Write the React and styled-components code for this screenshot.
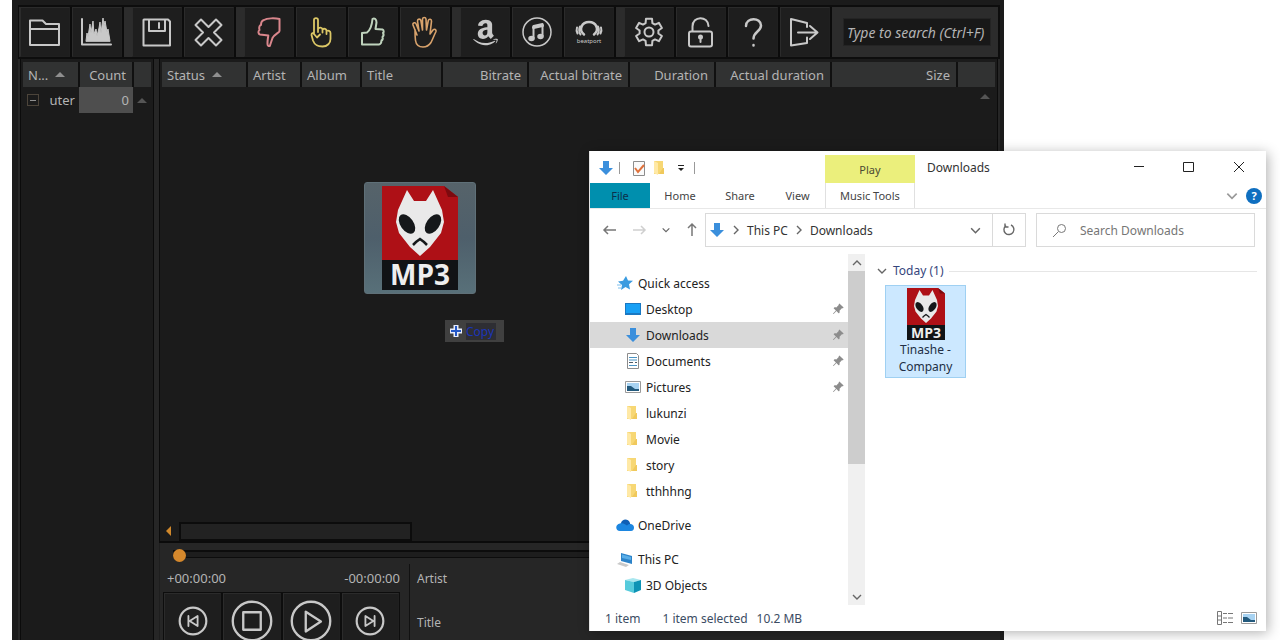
import React, { useState } from "react";
import styled, { createGlobalStyle } from "styled-components";
import { FaAmazon } from "react-icons/fa";
import { BsPinAngleFill } from "react-icons/bs";

const GlobalStyle = createGlobalStyle`
  * {
    box-sizing: border-box;
  }

  body {
    margin: 0;
    background: #ffffff;
    font-family: "Noto Sans", "Open Sans", sans-serif;
    font-size: 12px;
  }

  button,
  input {
    font: inherit;
    color: inherit;
  }
`;

const Desktop = styled.main`
  position: relative;
  min-height: 100vh;
  overflow: hidden;
`;

// Player window
const Player = styled.section`
  display: flex;
  flex-direction: column;
  height: 100vh;
  margin: 0 276px 0 12px;
  padding: 5px 4px 0 6px;
  overflow: hidden;
  background: #1b1b1b;
  color: #b4b4b4;
`;

const Toolbar = styled.div`
  display: flex;
  flex: none;
  gap: 8px;
  padding-left: 1px;
  border: 2px solid #0d0d0d;
  border-left-width: 1px;
  background: #2c2c2c;
`;

const ToolGroup = styled.div`
  display: flex;
  gap: 2px;
  padding-right: 2px;
  background: #0b0b0b;
`;

const ToolButton = styled.button`
  display: grid;
  place-items: center;
  width: 50px;
  height: 50px;
  padding: 0;
  border: 1px solid #2b2b2b;
  border-right-color: #202020;
  border-bottom-color: #202020;
  background: #1e1e1e;
  color: ${({ $color }) => $color || "#c8c8c8"};
`;

const SearchArea = styled.div`
  display: flex;
  flex: 1;
  align-items: center;
  padding: 0 7px 0 3px;
`;

const TrackSearch = styled.input`
  width: 100%;
  height: 28px;
  padding: 0 3px;
  border: 1px solid #242424;
  background: #181818;
  font-style: italic;
  font-size: 14px;

  &::placeholder {
    color: #b4b4b4;
    opacity: 1;
  }
`;

const PlayerBody = styled.div`
  display: flex;
  flex: 1;
  min-height: 0;
  border-left: 2px solid #262626;
`;

const Sidebar = styled.div`
  flex: none;
  width: 134px;
  padding: 3px 2px 0 2px;
  border-left: 1px solid #0b0b0b;
  border-right: 1px solid #0b0b0b;
`;

const Splitter = styled.div`
  flex: none;
  width: 5px;
  background: #262626;
`;

const MainColumn = styled.div`
  display: flex;
  flex: 1;
  flex-direction: column;
  min-width: 0;
  border-right: 2px solid #262626;
`;

const ListPane = styled.div`
  position: relative;
  display: flex;
  flex: 1;
  flex-direction: column;
  min-height: 0;
  padding: 3px 2px 0 2px;
  border: 1px solid #0b0b0b;
  border-width: 0 1px 2px 1px;
`;

const Table = styled.table`
  width: 100%;
  table-layout: fixed;
  border-collapse: collapse;
`;

const HeadCell = styled.th`
  height: 25px;
  padding: 0 ${({ $right }) => ($right ? "6px" : "5px")};
  border-right: 2px solid #101010;
  background: #313232;
  font-size: 13px;
  font-weight: normal;
  text-align: ${({ $right }) => ($right ? "right" : "left")};
  white-space: nowrap;

  &:last-child {
    border-right: 0;
  }
`;

const SortArrow = styled.span`
  display: inline-block;
  margin-left: 7px;
  border: 5px solid transparent;
  border-top: 0;
  border-bottom-color: #8f8f8f;
  vertical-align: 3px;
`;

const TreeCell = styled.td`
  height: 26px;
  padding: 0 4px;
  text-align: right;
  background: ${({ $filled }) => ($filled ? "#4e4e4e" : "transparent")};
  font-size: 13px;
`;

const TreeName = styled.div`
  display: flex;
  align-items: center;
  justify-content: space-between;
`;

const TreeToggle = styled.button`
  display: grid;
  place-items: center;
  width: 12px;
  height: 12px;
  padding: 0;
  border: 1px solid #4c443a;
  background: none;
  line-height: 8px;

  &::before {
    content: "";
    width: 6px;
    height: 1px;
    background: #8f8f8f;
  }
`;

const ScrollHint = styled.span`
  display: block;
  width: 10px;
  margin-left: auto;
  margin-right: ${({ $inset }) => $inset}px;
  margin-top: ${({ $top }) => $top || 0}px;
  border: 5px solid transparent;
  border-top: 0;
  border-bottom-color: #555555;
`;

const HorizontalScroll = styled.div`
  display: flex;
  align-items: center;
  height: 20px;
  margin-top: auto;
`;

const ScrollLeft = styled.button`
  width: 17px;
  height: 18px;
  padding: 0 0 0 4px;
  border: 0;
  background: none;

  &::before {
    content: "";
    display: block;
    width: 0;
    border: 5px solid transparent;
    border-left: 0;
    border-right-color: #d0882b;
  }
`;

const ScrollThumb = styled.div`
  width: 28%;
  height: 19px;
  border: 2px solid #0c0c0c;
  background: #222222;
`;

const DragImage = styled.div`
  position: absolute;
  left: 204px;
  top: 123px;
  display: grid;
  place-items: center;
  width: 112px;
  height: 112px;
  border: 1px solid #5f7078;
  border-radius: 3px;
  background: linear-gradient(#56636a, #4e5f6b 50%, #587079);
`;

const CopyHint = styled.div`
  position: absolute;
  left: 285px;
  top: 261px;
  display: flex;
  align-items: center;
  gap: 3px;
  height: 22px;
  padding: 0 8px 0 4px;
  background: #404040;
  color: #1c35b8;

  span {
    padding-right: 2px;
    background: #2e2e33;
  }
`;

const Controls = styled.div`
  flex: none;
  height: 97px;
  border-left: 1px solid #1e1e1e;
  background: #262626;
`;

const SeekBar = styled.input`
  display: block;
  width: calc(100% - 24px);
  height: 18px;
  margin: 3px 12px 0 13px;
  appearance: none;
  background: linear-gradient(
    transparent 4px,
    #0c0c0c 4px,
    #0c0c0c 6px,
    #1d1d1d 6px,
    #1d1d1d 11px,
    #0c0c0c 11px,
    #0c0c0c 12px,
    transparent 12px
  );

  &::-webkit-slider-thumb {
    appearance: none;
    width: 13px;
    height: 13px;
    border-radius: 50%;
    background: #d5882c;
  }
`;

const ControlRow = styled.div`
  display: flex;
`;

const Transport = styled.div`
  width: 250px;
  padding: 5px 9px 0 3px;
  border-right: 1px solid #111111;
`;

const Times = styled.div`
  display: flex;
  justify-content: space-between;
  height: 23px;
  padding: 0 0 0 4px;
  font-size: 13px;
  line-height: 18px;
`;

const TransportButtons = styled.div`
  display: flex;
  gap: 2px;
  padding: 1px;
  background: #0d0d0d;
`;

const TransportButton = styled(ToolButton)`
  flex: 1;
  height: 56px;
`;

const TrackInfo = styled.div`
  padding: 6px 7px;
  line-height: 18px;

  p {
    margin: 0 0 26px;
  }
`;

// Explorer window
const Explorer = styled.section`
  position: absolute;
  left: 589px;
  right: 14px;
  top: 151px;
  bottom: 9px;
  display: flex;
  flex-direction: column;
  border-left: 1px solid #e4e4e4;
  background: #ffffff;
  box-shadow: 2px 2px 12px rgba(0, 0, 0, 0.3);
  color: #333333;
`;

const TitleBar = styled.header`
  display: flex;
  height: 32px;
  padding-right: 2px;
`;

const QuickTools = styled.div`
  display: flex;
  align-items: center;
  gap: 5px;
  width: 235px;
  padding: 2px 0 0 8px;
`;

const QuickButton = styled.button`
  display: grid;
  place-items: center;
  width: 16px;
  height: 18px;
  padding: 0;
  border: 0;
  background: none;
`;

const Divider = styled.span`
  width: 1px;
  height: 12px;
  margin-right: 6px;
  background: #999999;
`;

const PlayTab = styled.button`
  width: 90px;
  margin-top: 4px;
  padding: 0;
  border: 0;
  background: #ebef7c;
  color: #4a4a33;
  font-size: 11px;
`;

const WindowTitle = styled.h1`
  flex: 1;
  margin: 0;
  padding-left: 12px;
  font-size: 12px;
  font-weight: normal;
  line-height: 33px;
`;

const WindowButton = styled.button`
  display: grid;
  place-items: center;
  width: 50px;
  padding: 0;
  border: 0;
  background: none;
`;

const Ribbon = styled.nav`
  display: flex;
  height: 26px;
  border-bottom: 1px solid #e8e8e8;
`;

const RibbonTab = styled.button`
  width: ${({ $width }) => $width}px;
  height: 25px;
  padding: 0;
  border: 0;
  background: ${({ $file }) => ($file ? "#008fae" : "none")};
  color: ${({ $file }) => ($file ? "#0b2f4a" : "#444444")};
  font-size: 11px;
  ${({ $outlined }) =>
    $outlined && "border-left: 1px solid #e0e0e0; border-right: 1px solid #e0e0e0;"}
`;

const RibbonEnd = styled.div`
  display: flex;
  align-items: center;
  gap: 7px;
  margin-left: auto;
  padding-right: 4px;
`;

const PlainButton = styled.button`
  display: grid;
  place-items: center;
  padding: 0;
  border: 0;
  background: none;
`;

const HelpButton = styled(PlainButton)`
  width: 16px;
  height: 16px;
  border-radius: 50%;
  background: #0f6fc0;
  color: #ffffff;
  font-size: 11px;
  font-weight: bold;
`;

const AddressRow = styled.div`
  display: flex;
  align-items: center;
  height: 42px;
  padding-right: 11px;
`;

const NavButtons = styled.div`
  display: flex;
  align-items: center;
  justify-content: space-between;
  width: 115px;
  padding: 0 5px 0 12px;
`;

const AddressBar = styled.div`
  display: flex;
  flex: 316;
  align-items: center;
  height: 34px;
  padding-left: 3px;
  border: 1px solid #dadada;
`;

const Crumb = styled.a`
  display: flex;
  align-items: center;
  gap: 5px;
  margin-left: 5px;
  color: #333333;
  text-decoration: none;
`;

const AddressEnd = styled.div`
  display: flex;
  align-self: stretch;
  margin-left: auto;

  button {
    width: 33px;
  }

  button + button {
    border-left: 1px solid #dadada;
  }
`;

const SearchBox = styled.label`
  display: flex;
  flex: 202;
  align-items: center;
  gap: 13px;
  height: 34px;
  margin-left: 10px;
  padding-left: 15px;
  border: 1px solid #dadada;

  input {
    min-width: 0;
    flex: 1;
    padding: 0;
    border: 0;
    outline: 0;
  }

  input::placeholder {
    color: #767676;
    opacity: 1;
  }
`;

const ExplorerBody = styled.div`
  display: flex;
  flex: 1;
  min-height: 0;
`;

const NavTree = styled.ul`
  width: 258px;
  margin: 0;
  padding: 19px 0 0;
  list-style: none;
`;

const NavItem = styled.li`
  margin-top: ${({ $spaced }) => ($spaced ? "8px" : "0")};
  background: ${({ $selected }) => ($selected ? "#d9d9d9" : "transparent")};
`;

const NavLink = styled.a`
  display: flex;
  align-items: center;
  gap: 5px;
  height: 26px;
  padding: 0 4px 0 ${({ $nested }) => ($nested ? "35px" : "27px")};
  color: #222222;
  text-decoration: none;

  span {
    flex: 1;
  }
`;

const VerticalScroll = styled.div`
  display: flex;
  flex-direction: column;
  width: 17px;
  margin-top: 3px;
  background: #f0f0f0;

  button {
    height: 17px;
  }

  div {
    height: 55%;
    background: #cdcdcd;
  }

  button:last-child {
    margin-top: auto;
  }
`;

const FileArea = styled.div`
  flex: 1;
  padding: 11px 9px 0 11px;
`;

const GroupTitle = styled.h2`
  display: flex;
  align-items: center;
  gap: 5px;
  margin: 0 0 5px;
  color: #35457c;
  font-size: 12px;
  font-weight: normal;
  line-height: 18px;

  &::after {
    content: "";
    flex: 1;
    height: 1px;
    background: #e6e6e6;
  }
`;

const FileTile = styled.button`
  display: flex;
  flex-direction: column;
  align-items: center;
  width: 81px;
  margin-left: 9px;
  padding: 2px 8px;
  border: 1px solid #9fd0f2;
  background: #cce8ff;
  color: #222f45;
  line-height: 17px;

  svg {
    margin-bottom: 1px;
  }
`;

const StatusBar = styled.footer`
  display: flex;
  align-items: center;
  height: 26px;
  padding: 0 9px 0 15px;
  color: #3c4c63;

  span:nth-child(2) {
    margin: 0 9px 0 22px;
  }
`;

const ViewButtons = styled.div`
  display: flex;
  gap: 8px;
  margin-left: auto;
`;

function Icon({ size = 36, width = 2, children }) {
  return (
    <svg
      width={size}
      height={size}
      viewBox="0 0 36 36"
      fill="none"
      stroke="currentColor"
      strokeWidth={width}
      strokeLinejoin="round"
      strokeLinecap="round"
      aria-hidden="true"
    >
      {children}
    </svg>
  );
}

// six teeth, four corner points each
const gearPoints = Array.from({ length: 6 })
  .flatMap((_, tooth) =>
    [
      [-21, 9.5],
      [-13, 13.5],
      [13, 13.5],
      [21, 9.5],
    ].map(([offset, radius]) => {
      const angle = ((tooth * 60 - 90 + offset) * Math.PI) / 180;
      return `${18 + radius * Math.cos(angle)},${18 + radius * Math.sin(angle)}`;
    })
  )
  .join(" ");

const toolGroups = [
  [
    {
      name: "Open folder",
      icon: (
        <Icon>
          <path d="M3 31V6.500h12.500l3.500 3.500h13V31zM3 15h29" />
        </Icon>
      ),
    },
    {
      name: "Spectrum",
      icon: (
        <Icon>
          <path d="M3 5v25.500h29" />
          <path
            d="M7 27l1-8 1 4 2-13 1 9 2-12 1 13 2-5 1 7 2-8 1-6 1 11 2-15 1 8 1-5 2 11 1-3 2 12z"
            fill="currentColor"
            strokeWidth="1"
          />
        </Icon>
      ),
    },
  ],
  [
    {
      name: "Save",
      icon: (
        <Icon>
          <path d="M5 5.500h24l2 2V31.500H4.500V6zM10 6v11h16V6M20 9v5" />
        </Icon>
      ),
    },
    {
      name: "Remove",
      icon: (
        <Icon>
          <path d="M10 5.500l7.500 7.500L25 5.500l5.500 5.500-7.500 7.500 7.500 7.500-5.500 5.500-7.500-7.500-7.500 7.500L4.500 26l7.500-7.500L4.500 11z" />
        </Icon>
      ),
    },
  ],
  [
    {
      name: "Bad",
      color: "#d9868c",
      icon: (
        <Icon>
          <path d="M13 6C16 4 24 4 28.500 5v12c0 1.500-5.500 3.500-7 7l-2.700 8c-2.800.500-2.800-2-1.500-10.500L9 20.500c-2-.5-2-3.500-.5-4.500-1-3 .5-5 1.500-5 0-3 1-4.500 3-5z" />
        </Icon>
      ),
    },
    {
      name: "Check",
      color: "#dcc766",
      icon: (
        <Icon width={1.8}>
          <path d="M11 20V6c0-2.500 4-2.500 4 0v9c1-2 4-2 4.500.5 1.500-1.500 4-.5 4 1.500 1.500-1 4 0 4 2v6c0 4-3 7.500-8 7.500-6 0-8-2-9.500-6L8.500 21c0-2 1.500-2.500 2.500-1l3 3.500 3-3M15 15v3M19.500 15.500v3M23.500 17v3" />
        </Icon>
      ),
    },
    {
      name: "Good",
      color: "#bfd3bd",
      icon: (
        <Icon>
          <path d="M7 19l5-.5c4-3 5-8 5.500-13.500 2-1.500 4 .5 4 3.500l-1 6.500 7 .5c1.500.5 1.500 3 .5 3.500 1 1.500.5 3-.5 4 .5 1.500 0 3-1 3.500 0 2-.5 3.500-2.500 4H7z" />
        </Icon>
      ),
    },
    {
      name: "Stop",
      color: "#d9a36c",
      icon: (
        <Icon width={1.6}>
          <path d="M10 21L6 11c-.5-2.500 2.500-3 3.200-1l2.800 7-1.500-10c0-2.500 3-2.500 3.400-.3L15.500 16V5c.3-2 3.200-2 3.500 0l.5 11 1.800-9.500c.7-2 3.400-1.500 3.200.8L23 20l3-4c1.500-1.500 3.500-.5 3 1.500-2 4-3 7-5 11-2 3-4 4.500-8 4.500-5 0-7-3-7.500-6.500-.5-4-.5-8-.5-11" />
        </Icon>
      ),
    },
  ],
  [
    { name: "Amazon", icon: <FaAmazon size={29} /> },
    {
      name: "iTunes",
      icon: (
        <Icon width={1.5}>
          <circle cx="18" cy="18" r="14" />
          <path d="M14.500 24V12l9-2v12" strokeWidth="2" />
          <path d="M14.500 13.500l9-2" strokeWidth="3" />
          <g fill="currentColor">
            <ellipse cx="12.500" cy="24.500" rx="2.500" ry="2" />
            <ellipse cx="21.500" cy="22.500" rx="2.500" ry="2" />
          </g>
        </Icon>
      ),
    },
    {
      name: "Beatport",
      icon: (
        <Icon>
          <path d="M13 20.500c-6-5-2-12.500 5-12.500S29 15.500 23 20.500" strokeWidth="2.500" />
          <path d="M9 12.500c-1.500 3-1 5.500.5 8M27 12.500c1.500 3 1 5.500-.5 8M6 13.500c-.7 2-.5 4 .5 6M30 13.500c.7 2 .5 4-.5 6" />
          <text
            x="18"
            y="29"
            textAnchor="middle"
            fontSize="6"
            stroke="none"
            fill="currentColor"
          >
            beatport
          </text>
        </Icon>
      ),
    },
  ],
  [
    {
      name: "Settings",
      icon: (
        <Icon>
          <polygon points={gearPoints} />
          <circle cx="18" cy="18" r="4.500" />
        </Icon>
      ),
    },
    {
      name: "Unlock",
      icon: (
        <Icon>
          <rect x="6" y="17.500" width="23" height="15" rx="2" />
          <path d="M9.500 17v-4.500C9.500 1.500 25 1.500 25.500 12" />
          <circle cx="17.500" cy="23" r="1.500" fill="currentColor" />
          <path d="M17.500 24v4" />
        </Icon>
      ),
    },
    {
      name: "Help",
      icon: (
        <Icon width={2.5}>
          <path d="M11 12c0-9 15-9 15-.5 0 6-7.500 6-7.500 13M18.500 31v.5" />
        </Icon>
      ),
    },
    {
      name: "Exit",
      icon: (
        <Icon>
          <path d="M20 13V9L4 5v26.500l16-2.500v-5.500M11 18.500h18M23 12l7.500 6.500L23 25" />
        </Icon>
      ),
    },
  ],
];

const columns = [
  { name: "Status", width: 85, sorted: true },
  { name: "Artist", width: 54 },
  { name: "Album", width: 60 },
  { name: "Title", width: 81 },
  { name: "Bitrate", width: 86, right: true },
  { name: "Actual bitrate", width: 101, right: true },
  { name: "Duration", width: 86, right: true },
  { name: "Actual duration", width: 116, right: true },
  { name: "Size", width: 126, right: true },
];

function Mp3Icon({ width }) {
  return (
    <svg
      width={width}
      viewBox="0 0 76 104"
      overflow="visible"
      role="img"
      aria-label="MP3 file"
    >
      <path d="M0 0h62l14 11v63H0z" fill="#ae1016" />
      <path d="M62 0l14 11H66z" fill="#7d0a0f" />
      <path d="M0 74h76v30H0z" fill="#111316" />
      <path
        d="M25 4l7 11h12l7-11 9 20 2 12-3 11-11 14-10 9-10-9-11-14-3-11 2-12z"
        fill="#e9e9e9"
      />
      <g fill="#15181a">
        <ellipse cx="25" cy="38" rx="6.500" ry="11" transform="rotate(-35 25 38)" />
        <ellipse cx="51" cy="38" rx="6.500" ry="11" transform="rotate(35 51 38)" />
      </g>
      <path d="M31 59l3-3 4-3 4 3 3 3" fill="none" stroke="#15181a" strokeWidth="2.500" />
      <text
        x="38"
        y="99"
        textAnchor="middle"
        fontFamily="Open Sans, sans-serif"
        fontWeight="700"
        fontSize="28"
        fill="#eeeeee"
      >
        MP3
      </text>
    </svg>
  );
}

function DownloadArrow() {
  return (
    <svg width="16" height="16" viewBox="0 0 16 16" aria-hidden="true">
      <path d="M5 1h6v7h4l-7 7-7-7h4z" fill="#3b8fdc" />
    </svg>
  );
}

function FolderIcon() {
  return (
    <svg width="16" height="16" viewBox="0 0 16 16" aria-hidden="true">
      <path d="M2 1h9v13H2z" fill="#f7d774" />
      <path d="M2 1l4 2v12l-4-2z" fill="#ffe9a6" />
      <path d="M11 8h1v6H7z" fill="#f0c95c" />
    </svg>
  );
}

function PictureIcon() {
  return (
    <svg width="16" height="16" viewBox="0 0 16 16" aria-hidden="true">
      <path d="M.5 2.500h15v11H.5z" fill="#ffffff" stroke="#9a9a9a" />
      <path d="M2 4h12v8H2z" fill="#a8d3f2" />
      <path d="M2 7l4 0 4 3h4v2H2z" fill="#235a7d" />
    </svg>
  );
}

function Chevron({ direction = "down", size = 12, color = "#666666" }) {
  const turns = { down: 0, up: 180, right: -90 };
  return (
    <svg width={size} height={size} viewBox="0 0 12 12" aria-hidden="true">
      <path
        d="M2 4l4 4 4-4"
        transform={`rotate(${turns[direction]} 6 6)`}
        fill="none"
        stroke={color}
        strokeWidth="1.400"
      />
    </svg>
  );
}

function Arrow({ turn = 0, color = "#777777" }) {
  return (
    <svg width="16" height="16" viewBox="0 0 16 16" aria-hidden="true">
      <path
        d="M14 8H2M6 4L2 8l4 4"
        transform={`rotate(${turn} 8 8)`}
        fill="none"
        stroke={color}
        strokeWidth="1.500"
      />
    </svg>
  );
}

const navItems = [
  {
    name: "Quick access",
    icon: (
      <svg width="16" height="16" viewBox="0 0 16 16" aria-hidden="true">
        <path d="M9 1l2 4.500 5 .2-4 3.500 1 5.300-4.500-2.500L4 15l1-5-4-3.500 5-.8z" fill="#3a9be0" />
        <path d="M0 10h4M1 13h3" stroke="#7cc0ee" />
      </svg>
    ),
  },
  {
    name: "Desktop",
    nested: true,
    pinned: true,
    icon: (
      <svg width="16" height="16" viewBox="0 0 16 16" aria-hidden="true">
        <path d="M0 2h16v12H0z" fill="#1a78c2" />
        <path d="M1 3h14v9H1z" fill="#18a0f5" />
      </svg>
    ),
  },
  { name: "Downloads", nested: true, pinned: true, icon: <DownloadArrow /> },
  {
    name: "Documents",
    nested: true,
    pinned: true,
    icon: (
      <svg width="16" height="16" viewBox="0 0 16 16" aria-hidden="true">
        <path d="M2.500.5h9l2 2v13h-11z" fill="#ffffff" stroke="#8c8c8c" />
        <path d="M4 4.500h8M4 7h8M4 12.500h8" stroke="#4b94c4" />
        <path d="M4 9.500h4M10 9.500h2" stroke="#4d5b66" />
      </svg>
    ),
  },
  { name: "Pictures", nested: true, pinned: true, icon: <PictureIcon /> },
  { name: "lukunzi", nested: true, icon: <FolderIcon /> },
  { name: "Movie", nested: true, icon: <FolderIcon /> },
  { name: "story", nested: true, icon: <FolderIcon /> },
  { name: "tthhhng", nested: true, icon: <FolderIcon /> },
  {
    name: "OneDrive",
    spaced: true,
    icon: (
      <svg
        width="16"
        height="14"
        viewBox="1 0 16 14"
        overflow="visible"
        aria-hidden="true"
      >
        <path d="M5 5c1-4 7-5 9 0l1 6H3z" fill="#0f5fb5" />
        <path d="M4 13c-5 0-5-7 0-7.500 3-1 5 1 7 2 3-3 7-1 7 2 0 2-1 3.500-3 3.500z" fill="#1c86e0" />
      </svg>
    ),
  },
  {
    name: "This PC",
    spaced: true,
    icon: (
      <svg width="16" height="16" viewBox="0 0 16 16" aria-hidden="true">
        <path d="M4 2l11 3v8L4 10z" fill="#2c83c9" />
        <path d="M5 3.500l9 2.500v3L5 7z" fill="#5aaee8" />
        <path d="M3 11l9 3-3 2-9-3z" fill="#c9c9c9" />
      </svg>
    ),
  },
  {
    name: "3D Objects",
    nested: true,
    icon: (
      <svg width="16" height="16" viewBox="0 0 16 16" aria-hidden="true">
        <path d="M0 3l8-2 8 2-7 2z" fill="#a9e7ef" />
        <path d="M0 3l9 2v11l-9-3z" fill="#56cbdc" />
        <path d="M9 5l7-2v10l-7 3z" fill="#0d93b5" />
      </svg>
    ),
  },
];

function MusicPlayer() {
  const [position, setPosition] = useState(0);

  return (
    <Player>
      <Toolbar>
        {toolGroups.map((group, index) => (
          <ToolGroup key={index}>
            {group.map((tool) => (
              <ToolButton
                key={tool.name}
                type="button"
                aria-label={tool.name}
                $color={tool.color}
              >
                {tool.icon}
              </ToolButton>
            ))}
          </ToolGroup>
        ))}
        <SearchArea>
          <TrackSearch
            type="text"
            aria-label="Search tracks"
            placeholder="Type to search (Ctrl+F)"
          />
        </SearchArea>
      </Toolbar>

      <PlayerBody>
        <Sidebar>
          <Table>
            <colgroup>
              <col style={{ width: 56 }} />
              <col style={{ width: 54 }} />
              <col />
            </colgroup>
            <thead>
              <tr>
                <HeadCell>
                  N...
                  <SortArrow />
                </HeadCell>
                <HeadCell $right>Count</HeadCell>
                <HeadCell />
              </tr>
            </thead>
            <tbody>
              <tr>
                <TreeCell>
                  <TreeName>
                    <TreeToggle type="button" aria-label="Collapse" />
                    uter
                  </TreeName>
                </TreeCell>
                <TreeCell $filled>0</TreeCell>
                <TreeCell>
                  <ScrollHint $inset={0} />
                </TreeCell>
              </tr>
            </tbody>
          </Table>
        </Sidebar>
        <Splitter />
        <MainColumn>
          <ListPane>
            <Table>
              <colgroup>
                {columns.map((column) => (
                  <col key={column.name} style={{ width: column.width }} />
                ))}
                <col />
              </colgroup>
              <thead>
                <tr>
                  {columns.map((column) => (
                    <HeadCell key={column.name} $right={column.right}>
                      {column.name}
                      {column.sorted && <SortArrow />}
                    </HeadCell>
                  ))}
                  <HeadCell />
                </tr>
              </thead>
            </Table>
            <ScrollHint $inset={5} $top={7} />
            <HorizontalScroll>
              <ScrollLeft type="button" aria-label="Scroll left" />
              <ScrollThumb />
            </HorizontalScroll>
            <DragImage>
              <Mp3Icon width={76} />
            </DragImage>
            <CopyHint>
              <svg width="14" height="14" viewBox="0 0 14 14" aria-hidden="true">
                <path d="M7 1v12M1 7h12" stroke="#e6ecfa" strokeWidth="5" />
                <path d="M7 2v10M2 7h10" stroke="#2457c5" strokeWidth="2" />
              </svg>
              <span>Copy</span>
            </CopyHint>
          </ListPane>

          <Controls>
            <SeekBar
              type="range"
              aria-label="Seek"
              value={position}
              onChange={(event) => setPosition(event.target.value)}
            />
            <ControlRow>
              <Transport>
                <Times>
                  <span>+00:00:00</span>
                  <span>-00:00:00</span>
                </Times>
                <TransportButtons>
                  <TransportButton type="button" aria-label="Previous">
                    <Icon size={30} width={2.6}>
                      <circle cx="18" cy="18" r="16" />
                      <path d="M12.500 12v12M23.500 12v12L14 18z" strokeWidth="2.200" />
                    </Icon>
                  </TransportButton>
                  <TransportButton type="button" aria-label="Stop playback">
                    <Icon size={42}>
                      <circle cx="18" cy="18" r="16.500" />
                      <path d="M10.500 10.500h15v15h-15z" />
                    </Icon>
                  </TransportButton>
                  <TransportButton type="button" aria-label="Play">
                    <Icon size={42}>
                      <circle cx="18" cy="18" r="16.500" />
                      <path d="M13.500 10v17l13-8.500z" />
                    </Icon>
                  </TransportButton>
                  <TransportButton type="button" aria-label="Next">
                    <Icon size={30} width={2.6}>
                      <circle cx="18" cy="18" r="16" />
                      <path d="M23.500 12v12M12.500 12v12l9.500-6z" strokeWidth="2.200" />
                    </Icon>
                  </TransportButton>
                </TransportButtons>
              </Transport>
              <TrackInfo>
                <p>Artist</p>
                <p>Title</p>
              </TrackInfo>
            </ControlRow>
          </Controls>
        </MainColumn>
      </PlayerBody>
    </Player>
  );
}

function DownloadsWindow() {
  return (
    <Explorer>
      <TitleBar>
        <QuickTools>
          <DownloadArrow />
          <Divider />
          <QuickButton type="button" aria-label="Properties">
            <svg width="16" height="18" viewBox="0 0 16 18" aria-hidden="true">
              <path d="M2.500 2.500h11v14h-11z" fill="#fafafa" stroke="#8d8d8d" />
              <path d="M4 9l3 4 6-7" fill="none" stroke="#e0713a" strokeWidth="2" />
            </svg>
          </QuickButton>
          <QuickButton type="button" aria-label="New folder">
            <FolderIcon />
          </QuickButton>
          <QuickButton type="button" aria-label="Customize toolbar">
            <svg width="8" height="8" viewBox="0 0 8 8" aria-hidden="true">
              <path d="M1 1.500h6" stroke="#222222" />
              <path d="M1 4h6L4 7z" fill="#222222" />
            </svg>
          </QuickButton>
          <Divider />
        </QuickTools>
        <PlayTab type="button">Play</PlayTab>
        <WindowTitle>Downloads</WindowTitle>
        <WindowButton type="button" aria-label="Minimize">
          <svg width="12" height="12" viewBox="0 0 12 12">
            <path d="M1 5.500h10" stroke="#222222" />
          </svg>
        </WindowButton>
        <WindowButton type="button" aria-label="Maximize">
          <svg width="12" height="12" viewBox="0 0 12 12">
            <path d="M.5 1.500h10v9H.5z" fill="none" stroke="#222222" />
          </svg>
        </WindowButton>
        <WindowButton type="button" aria-label="Close">
          <svg width="12" height="12" viewBox="0 0 12 12">
            <path d="M1 1l10 10M11 1L1 11" stroke="#222222" />
          </svg>
        </WindowButton>
      </TitleBar>

      <Ribbon>
        <RibbonTab type="button" $width={60} $file>
          File
        </RibbonTab>
        <RibbonTab type="button" $width={60}>
          Home
        </RibbonTab>
        <RibbonTab type="button" $width={60}>
          Share
        </RibbonTab>
        <RibbonTab type="button" $width={55}>
          View
        </RibbonTab>
        <RibbonTab type="button" $width={90} $outlined>
          Music Tools
        </RibbonTab>
        <RibbonEnd>
          <PlainButton type="button" aria-label="Expand ribbon">
            <Chevron size={14} color="#999999" />
          </PlainButton>
          <HelpButton type="button">?</HelpButton>
        </RibbonEnd>
      </Ribbon>

      <AddressRow>
        <NavButtons>
          <PlainButton type="button" aria-label="Back">
            <Arrow />
          </PlainButton>
          <PlainButton type="button" aria-label="Forward">
            <Arrow turn={180} color="#cfcfcf" />
          </PlainButton>
          <PlainButton type="button" aria-label="Recent locations">
            <Chevron size={10} />
          </PlainButton>
          <PlainButton type="button" aria-label="Up">
            <Arrow turn={90} />
          </PlainButton>
        </NavButtons>
        <AddressBar>
          <DownloadArrow />
          <Crumb href="#this-pc">
            <Chevron direction="right" />
            This PC
          </Crumb>
          <Crumb href="#downloads">
            <Chevron direction="right" />
            Downloads
          </Crumb>
          <AddressEnd>
            <PlainButton type="button" aria-label="Previous locations">
              <Chevron size={13} />
            </PlainButton>
            <PlainButton type="button" aria-label="Refresh">
              <svg width="14" height="14" viewBox="0 0 14 14">
                <path
                  d="M9 2a5 5 0 1 1-5 .5M3 .5v3.500h3.500"
                  fill="none"
                  stroke="#666666"
                  strokeWidth="1.400"
                />
              </svg>
            </PlainButton>
          </AddressEnd>
        </AddressBar>
        <SearchBox>
          <svg width="15" height="15" viewBox="0 0 15 15" aria-hidden="true">
            <path d="M1 14l5-5" stroke="#777777" />
            <circle cx="9.500" cy="5.500" r="4" fill="none" stroke="#777777" />
          </svg>
          <input type="text" aria-label="Search" placeholder="Search Downloads" />
        </SearchBox>
      </AddressRow>

      <ExplorerBody>
        <NavTree>
          {navItems.map((item) => (
            <NavItem
              key={item.name}
              $spaced={item.spaced}
              $selected={item.name === "Downloads"}
            >
              <NavLink href="#" $nested={item.nested}>
                {item.icon}
                <span>{item.name}</span>
                {item.pinned && <BsPinAngleFill size={12} color="#8c8c8c" />}
              </NavLink>
            </NavItem>
          ))}
        </NavTree>
        <VerticalScroll>
          <PlainButton type="button" aria-label="Scroll up">
            <Chevron direction="up" />
          </PlainButton>
          <div />
          <PlainButton type="button" aria-label="Scroll down">
            <Chevron />
          </PlainButton>
        </VerticalScroll>
        <FileArea>
          <GroupTitle>
            <Chevron />
            Today (1)
          </GroupTitle>
          <FileTile type="button">
            <Mp3Icon width={38} />
            Tinashe - Company
          </FileTile>
        </FileArea>
      </ExplorerBody>

      <StatusBar>
        <span>1 item</span>
        <span>1 item selected</span>
        <span>10.2 MB</span>
        <ViewButtons>
          <PlainButton type="button" aria-label="Details view">
            <svg width="16" height="14" viewBox="0 0 16 14">
              <path d="M.5.500h4v13h-4zM.5 5h4M.5 9h4" fill="none" stroke="#777777" />
              <path
                d="M6 2.500h4M11 2.500h5M6 7h4M11 7h5M6 11.500h4M11 11.500h5"
                stroke="#777777"
              />
            </svg>
          </PlainButton>
          <PlainButton type="button" aria-label="Large icons view">
            <PictureIcon />
          </PlainButton>
        </ViewButtons>
      </StatusBar>
    </Explorer>
  );
}

export default function App() {
  return (
    <>
      <GlobalStyle />
      <Desktop>
        <MusicPlayer />
        <DownloadsWindow />
      </Desktop>
    </>
  );
}
